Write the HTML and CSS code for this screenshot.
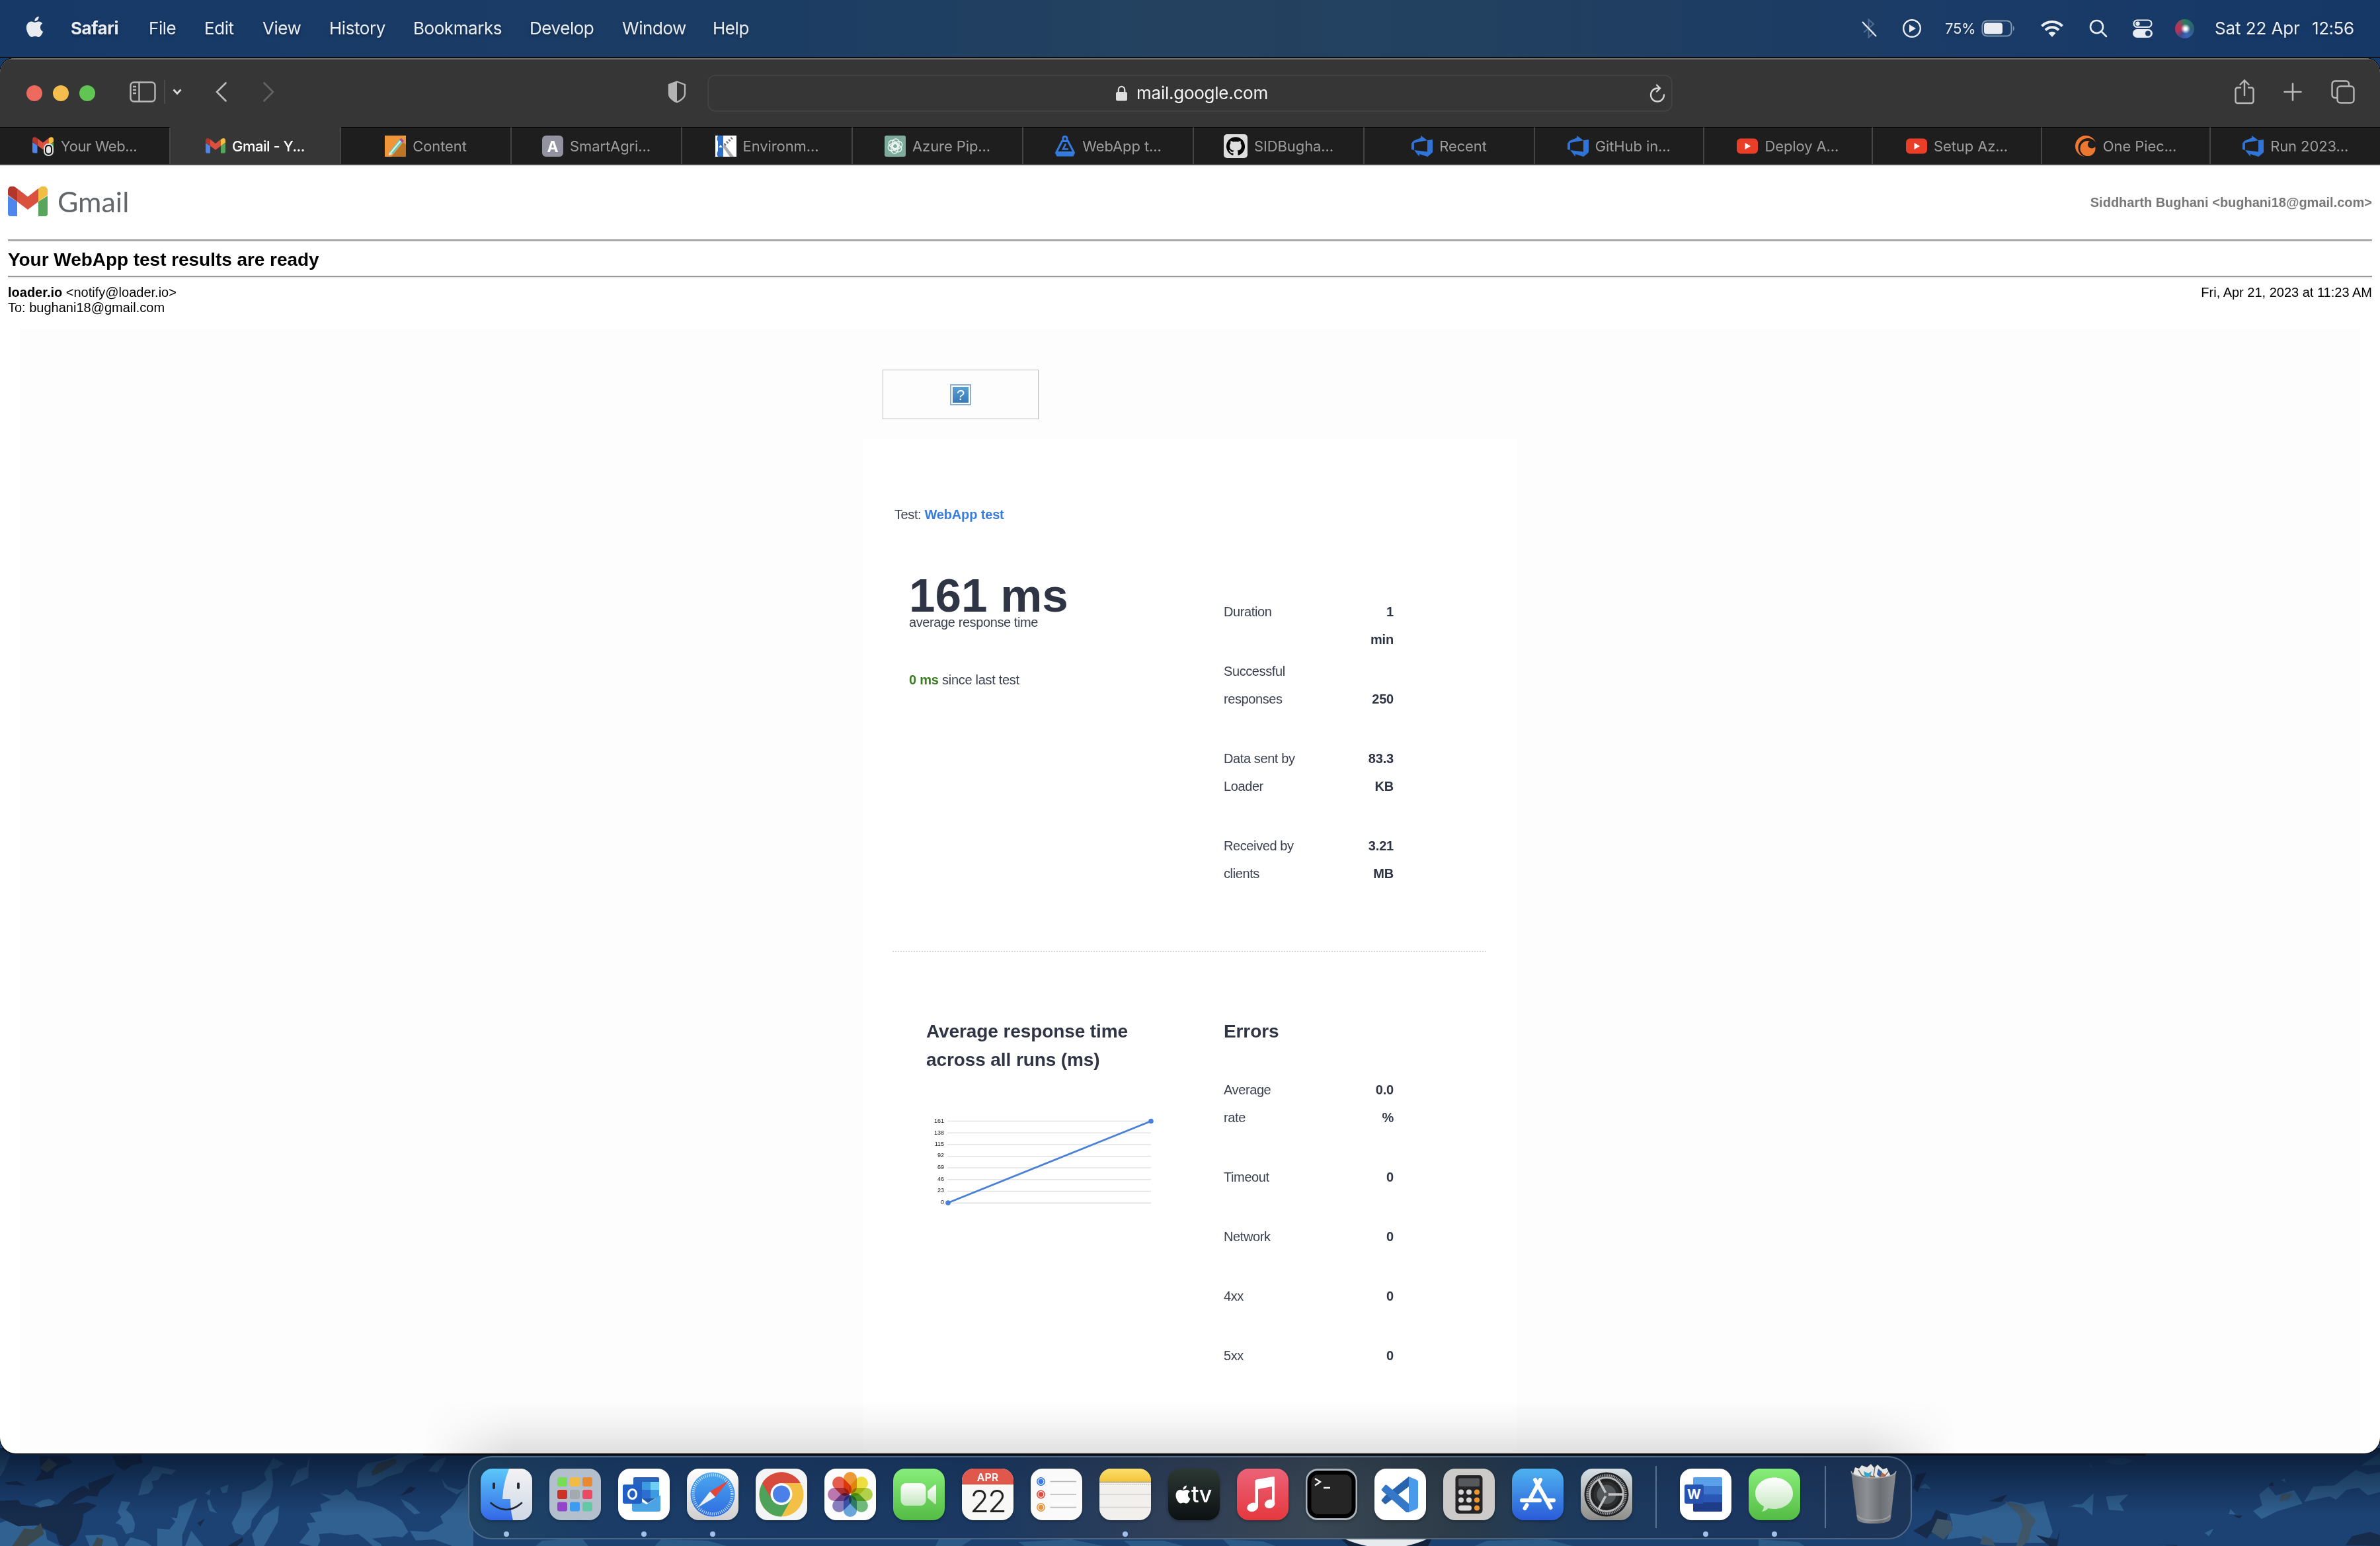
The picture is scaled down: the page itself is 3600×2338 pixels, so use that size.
FILE: index.html
```html
<!DOCTYPE html>
<html lang="en">
<head>
<meta charset="utf-8">
<title>Gmail - Your WebApp test results are ready</title>
<link rel="stylesheet" href="styles.css">
</head>
<body>
<svg class="defs" width="0" height="0" aria-hidden="true">
  <defs>
    <symbol id="apple" viewBox="0 0 24 24"><path fill="currentColor" d="M12.152 6.896c-.948 0-2.415-1.078-3.96-1.04-2.04.027-3.91 1.183-4.961 3.014-2.117 3.675-.546 9.103 1.519 12.09 1.013 1.454 2.208 3.09 3.792 3.039 1.52-.065 2.09-.987 3.935-.987 1.831 0 2.35.987 3.96.948 1.637-.026 2.676-1.48 3.676-2.948 1.156-1.688 1.636-3.325 1.662-3.415-.039-.013-3.182-1.221-3.22-4.857-.026-3.04 2.48-4.494 2.597-4.559-1.429-2.09-3.623-2.324-4.39-2.376-2-.156-3.675 1.09-4.61 1.09zM15.53 3.83c.843-1.012 1.4-2.427 1.245-3.83-1.207.052-2.662.805-3.532 1.818-.78.896-1.454 2.338-1.273 3.714 1.338.104 2.715-.688 3.559-1.701"/></symbol>
    <symbol id="gmail" viewBox="0 0 60 45">
      <path fill="#4f86ec" d="M0 14l14 9v22H4a4 4 0 0 1-4-4z"/>
      <path fill="#58a65c" d="M46 23l14-9v27a4 4 0 0 1-4 4H46z"/>
      <path fill="#d9503f" d="M14 3l16 12.500L46 3v20L30 35 14 23z"/>
      <path fill="#b3362b" d="M0 6C0 0 6-2 10.500 .8L14 3.300V23L0 13z"/>
      <path fill="#f1bd42" d="M60 6C60 0 54-2 49.500 .8L46 3.300V23l14-10z"/>
    </symbol>
    <symbol id="devops" viewBox="0 0 24 24"><path fill="#2f74d6" d="M0 8.877L2.247 5.910l8.405-3.416V.022l7.370 5.393L2.966 8.338v8.225L0 15.707zm24-4.450v14.651l-5.753 4.900-9.303-3.057v3.056l-5.978-7.416 15.057 1.798V5.415z"/></symbol>
    <symbol id="youtube" viewBox="0 0 32 24"><rect width="32" height="23" y=".5" rx="6" fill="#ea3e28"/><path fill="#fff" d="M12.500 7l8.500 5-8.500 5z"/></symbol>
    <linearGradient id="finderBlue" x2="0" y2="1"><stop offset="0" stop-color="#5bc8fa"/><stop offset="1" stop-color="#3467e6"/></linearGradient>
    <linearGradient id="finderPale" x2="0" y2="1"><stop offset="0" stop-color="#f2f2f4"/><stop offset="1" stop-color="#cfd8e6"/></linearGradient>
    <linearGradient id="compass" x2="0" y2="1"><stop offset="0" stop-color="#4aa8f0"/><stop offset="1" stop-color="#2f6ce0"/></linearGradient>
    <linearGradient id="safariBase" x2="0" y2="1"><stop offset="0" stop-color="#fff"/><stop offset="1" stop-color="#cfcfcf"/></linearGradient>
    <linearGradient id="whiteFade" x2="0" y2="1"><stop offset="0" stop-color="#fff"/><stop offset="1" stop-color="#c3e6bd"/></linearGradient>
    <linearGradient id="noteTop" x2="0" y2="1"><stop offset="0" stop-color="#fbe06c"/><stop offset="1" stop-color="#f4c33a"/></linearGradient>
    <linearGradient id="gearBase" x2="0" y2="1"><stop offset="0" stop-color="#d6e0e7"/><stop offset="1" stop-color="#8f8d8a"/></linearGradient>
    <linearGradient id="trashBody"><stop offset="0" stop-color="#6d7176"/><stop offset=".35" stop-color="#8d9195"/><stop offset=".65" stop-color="#6c6f73"/><stop offset="1" stop-color="#888b90"/></linearGradient>
    <linearGradient id="vignette" x2="0" y2="1"><stop offset="0" stop-color="#061226" stop-opacity=".78"/><stop offset="1" stop-color="#061226" stop-opacity="0"/></linearGradient>
    <linearGradient id="questionBg" x2="0" y2="1"><stop offset="0" stop-color="#57a0d3"/><stop offset="1" stop-color="#3878b8"/></linearGradient>
  </defs>
</svg>

<div class="desktop">
  <svg class="wallpaper" viewBox="0 0 3600 168" width="3600" height="168" aria-hidden="true">
    <rect width="3600" height="168" fill="#1c4274"/>
    <g transform="scale(.4592 .3333)">
      <g fill="#306190">
        <path d="M0 60l34 30-20 70-14 30z"/>
        <path d="M0 400l30-15 50 5 40-30 15 20-10 35 25 20 5 40 45 30H0z"/>
        <path d="M112 315l30-20 20-5 20 15-20 25-10 20-15-18z"/>
        <path d="M400 300l30 5-15 35 20 25 10 40-5 35-25 10-15-40-20-10 20-25-12-25z"/>
        <path d="M455 275l15-75 25-30 10-30 35 10 40 10-15 20-30-5-15 30-20 5 5 30-15 25z"/>
        <path d="M590 325l60-40-50 170 0 49H518v-80l40 5 20-35-15-20 20 5z"/>
        <path d="M870 175l30-70 35 25-20 20-20 5 5 70-10 60-35 55-25 45-5 35-25 35-25-10-12-45 30-75 5-65 40-15 40-40z"/>
        <path d="M830 450l40-85 50-45-5 75-25 60-20 49h-30z"/>
        <path d="M955 235l25-75 30-15 10-50-3 60-2 40z"/>
        <path d="M690 290l10 40 15 25-25-10-8-45zM725 240l28-15-5 35-15 5zM675 265l20-20-5 30z"/>
        <path d="M985 490l35-60-10-30 30-5-20-40 40-10-5-30 35-20-35-30 40 10 25-5 20-25 25 25 10 25 40 10 50 25 40 35 20 25 20 50-20 25-25-5-40 5-35 5 30 25 10 45-15-10-50-60-20-20-45 5-45-10-40 5 5 30-10 30z"/>
        <path d="M1175 240l5-70 30-40 70-20 40-25 90 10-40 20-30 20-15 35-50 20-50 40z"/>
        <path d="M1410 165l30-50 30-15-10 35-20 35zM1455 200l20 35 40 15 30-20-40 40-40-30zM1320 290l30 20 35 45-20 5-30-35z"/>
        <path d="M1350 435l60 5 50-40-10-30 40-45 45-95 25-50V504h-70l-60-30-60 5z"/>
        <path d="M280 455l60-3 40 15 10 37h-95zM410 504l20-40 50 20 20 20zM610 504l20-70 20 35 20 35z"/>
      </g>
      <g fill="#172b4b">
        <path d="M370 95l95-8 5 40-35 10-25 25-25-20z"/>
        <path d="M0 300l60-5 10 20 60 15 60-15 40-55 45-30 20 20-5-30 90-45-20 45-30 30-10 30-30-5-55 40 50-10 35 15-45 40-5 50-20 70-30 30-25-15-10-45-60-40-65 5-60-40z"/>
        <path d="M130 95h90l20 30-40 20-20 20-5 30-60 15 20-40zM15 215l40-5 30 20-60-5zM1320 275l30-40 20 5-15 20zM650 400l25-20-15 35zM750 504l50-40v20l-20 20z"/>
      </g>
      <g fill="#3a4850"><path d="M1225 165l20-35 60-25v25l-50 40-30 15zM40 504l40-80 30 5 25-30 10 50-55 55zM305 504l15-40 20 10-5 30zM130 150l30-45 30 30-35 35z"/></g>
    </g>
    <g transform="translate(2880 0) scale(.4592 .3333)">
      <g fill="#306190">
        <path d="M140 475l20-65-10-55 60 10 60-20 40-15 40-30 50 15 60-15 10 50 20 90-20 49H300l-80-30z"/>
        <path d="M425 320l25-5 20 25-25 25zM540 330l25-15 20 0 40-50-5 100-30-35-45-5zM665 280l75-10-30 40 15 35-50-5z"/>
        <path d="M660 120q40-30 95-5-40 40-95 5zM610 125l15 28-12-5z" opacity=".5"/>
        <path d="M1150 345l30-25-10-50 30-35 25 40 60-25 28 62-85 35-50 35z"/>
        <path d="M1318 304l30-70 70-5 70-70 40 20 40-10v90l-40 15-30-35-40 10-35 45-20-15-35 10z"/>
        <path d="M1505 140l63-60v55zM990 445l30-20-15 35zM1070 360l5-25 18 26zM1240 205l14-6 3 16zM50 240l20-20 20 25z"/>
      </g>
      <g fill="#172b4b"><path d="M30 435l60-50 15-45 40 20-10 50-50 40-10 20zM280 300l60-30-20 35zM480 504l-45-50 30 10 40 10 10-50-10 80zM1455 500l20-40 60-20 33 15v49zM1085 365l30 0-10 15zM840 495l60 5v4zM1200 230l14-18 4 20zM30 240l10-60 35-10-20 50-10 40z"/></g>
      <g fill="#3f5568"><path d="M90 440l20-60 45 10 5 40-30 45zM330 300l60 20 45 70-15 30-10 60-20 24h-20l20-90-10-50zM1235 300l10-35 35 2-15 30zM250 495l10-40 30 20 10 29z"/></g>
    </g>
    <rect x="716" y="120" width="2168" height="48" fill="#1b4170"/>
    <path d="M820 160l60-4 10 12h-80zM1000 158l70 2 30 8H990zM1420 158l50 0-15 10h-40zM1540 162l80-4 50 10h-120zM1700 160l60 0 30 8h-80zM1850 158l60 3 20 7h-70zM2250 160l90-2 40 10h-150zM2660 158l60 4 10 6h-70z" fill="#2b5a87"/>
    <path d="M2020 150h150l-10 18h-120z" fill="#14233c"/>
    <path d="M2033 157q65 28 127 0v-6h-127z" fill="#e8ebee"/>
    <rect width="3600" height="100" y="20" fill="url(#vignette)"/>
    <rect x="640" y="28" width="2605" height="3" fill="#0b0b0d"/>
  </svg>

  <header class="menubar">
    <svg class="apple"><use href="#apple"/></svg>
    <nav class="menus">
      <b>Safari</b><span>File</span><span>Edit</span><span>View</span><span>History</span><span>Bookmarks</span><span>Develop</span><span>Window</span><span>Help</span>
    </nav>
    <div class="status">
      <svg width="28" height="30" viewBox="0 0 28 30" fill="none"><path d="M3 9l15 12.500-7.500 7V1.500l7.500 7L3 21" stroke="#4d6a8d" stroke-width="2.200"/><path d="M1 5l21 22" stroke="#e6ecf2" stroke-width="2.200"/></svg>
      <svg width="30" height="30" viewBox="0 0 30 30"><circle cx="15" cy="15" r="12.800" fill="none" stroke="#e9edf2" stroke-width="2.400"/><path d="M11 9l10 6-10 6z" fill="#e9edf2"/></svg>
      <span class="percent">75%</span>
      <svg width="54" height="26" viewBox="0 0 54 26"><rect x="2.500" y="1.500" width="44" height="23" rx="7" fill="none" stroke="#7f94ad" stroke-width="2.200"/><rect x="5" y="4.500" width="28" height="17" rx="4" fill="#e9edf2"/><path d="M49 9q4 4 0 8z" fill="#7f94ad"/></svg>
      <svg width="36" height="28" viewBox="0 0 36 28" fill="none" stroke="#e9edf2" stroke-width="4"><path d="M2.500 10.500a22 22 0 0 1 31 0M8 16.500a14 14 0 0 1 20 0"/><path d="M18 27l-5.500-6a8 8 0 0 1 11 0z" fill="#e9edf2" stroke="none"/></svg>
      <svg width="28" height="28" viewBox="0 0 28 28" fill="none" stroke="#e9edf2" stroke-width="2.600"><circle cx="11.500" cy="11.500" r="9.500"/><path d="M18.500 18.500l7.500 7.500" stroke-linecap="round"/></svg>
      <svg width="30" height="28" viewBox="0 0 30 28"><rect x="1.500" y="1.500" width="27" height="10.500" rx="5.250" fill="none" stroke="#e9edf2" stroke-width="2.200"/><circle cx="7.500" cy="6.700" r="3.200" fill="#e9edf2"/><rect y="15" width="30" height="13" rx="6.500" fill="#e9edf2"/><circle cx="23" cy="21.500" r="4" fill="#1b3c68"/></svg>
      <span class="siri"></span>
      <span class="date">Sat 22 Apr</span>
      <span class="time">12:56</span>
    </div>
  </header>
  <div class="strip"><i class="chip-a"></i><i class="chip-b"></i></div>

  <main class="window">
    <div class="toolbar">
      <div class="lights"><i class="red"></i><i class="yellow"></i><i class="green"></i></div>
      <svg class="sidebar-icon" width="40" height="32" viewBox="0 0 40 32" fill="none" stroke="#b9b9b9" stroke-width="2.400"><rect x="1.500" y="1.500" width="37" height="29" rx="5"/><path d="M14.500 2v28M5 8h5M5 13h5M5 18h5"/></svg>
      <i class="bar"></i>
      <svg class="caret" width="14" height="10" viewBox="0 0 14 10" fill="none" stroke="#dcdcdc" stroke-width="2.800"><path d="M1.500 1.500L7 7.500l5.500-6"/></svg>
      <svg class="back" width="17" height="30" viewBox="0 0 17 30" fill="none" stroke="#bdbdbd" stroke-width="2.600" stroke-linecap="round"><path d="M15.500 1.500L2 15l13.500 13.500"/></svg>
      <svg class="forward" width="17" height="30" viewBox="0 0 17 30" fill="none" stroke="#646464" stroke-width="2.600" stroke-linecap="round"><path d="M1.500 1.500L15 15 1.500 28.500"/></svg>
      <svg class="shield" width="28" height="34" viewBox="0 0 28 34"><path d="M14 1.500L26 6v14q0 7-12 12.500Q2 27 2 20V6z" fill="none" stroke="#b4b4b4" stroke-width="2.400"/><path d="M14 1.500V32.500Q2 27 2 20V6z" fill="#b4b4b4"/></svg>
      <div class="address">
        <svg width="18" height="24" viewBox="0 0 18 24"><rect y="10" width="17" height="13.500" rx="2.500" fill="#dedede"/><path d="M3.800 11V6.500a4.700 4.700 0 0 1 9.400 0V11" fill="none" stroke="#dedede" stroke-width="2.200"/></svg>
        <span>mail.google.com</span>
        <svg class="reload" width="24" height="28" viewBox="0 0 24 28" fill="none" stroke="#d6d6d6" stroke-width="2.300" stroke-linecap="round"><path d="M14.500 6.500H12A10 10 0 1 0 22 16.500M11 1.500l5 5-5 5"/></svg>
      </div>
      <svg class="share" width="30" height="38" viewBox="0 0 30 38" fill="none" stroke="#b9b9b9" stroke-width="2.400" stroke-linecap="round"><path d="M9 12.500H4.500a3 3 0 0 0-3 3V33a3 3 0 0 0 3 3h21a3 3 0 0 0 3-3V15.500a3 3 0 0 0-3-3H21M15 24V2M8.500 8L15 1.500 21.500 8"/></svg>
      <svg class="plus" width="28" height="28" viewBox="0 0 28 28" stroke="#b9b9b9" stroke-width="2.600" stroke-linecap="round"><path d="M14 1.500v25M1.500 14h25"/></svg>
      <svg class="overview" width="36" height="36" viewBox="0 0 36 36" fill="none" stroke="#b9b9b9" stroke-width="2.400"><rect x="9.500" y="9.500" width="25" height="25" rx="4.500"/><path d="M9 27H6a4.500 4.500 0 0 1-4.500-4.500V6A4.500 4.500 0 0 1 6 1.500h16.500A4.500 4.500 0 0 1 27 6v3"/></svg>
    </div>

    <div class="tabs">
      <div class="tab"><svg width="33" height="30" viewBox="0 0 33 30"><use href="#gmail" y="1" width="32" height="25"/><rect x="18" y="12" width="13" height="17" rx="6" fill="#111" stroke="#ddd" stroke-width="2"/><rect x="21" y="15" width="7" height="11" rx="3.500" fill="#e6e6e6"/></svg><span>Your Web...</span></div>
      <div class="tab active"><svg width="30" height="23"><use href="#gmail"/></svg><span>Gmail - Y...</span></div>
      <div class="tab"><svg width="32" height="32" viewBox="0 0 32 32"><rect width="32" height="32" fill="#f0953a"/><path d="M10 32l18-22 4 4v18z" fill="#bf7526"/><path d="M7 25l15-19 5 4-15 18-6 2z" fill="#5fc8d8"/><path d="M9 26l15-18" stroke="#eaf7c0" stroke-width="2"/><path d="M22 6l3-2 4 4-2 3z" fill="#a04fa0"/><path d="M7 25l-1 5 6-2z" fill="#f7e3c4"/></svg><span>Content</span></div>
      <div class="tab"><svg width="32" height="32" viewBox="0 0 32 32"><rect width="32" height="32" rx="6" fill="#9292a0"/><text x="16" y="24.500" class="fav-letter">A</text></svg><span>SmartAgri...</span></div>
      <div class="tab"><svg width="32" height="32" viewBox="0 0 32 32"><rect width="32" height="32" fill="#fff"/><path d="M4 0h8v32H4q-3-4 0-9V9q-3-4 0-9z" fill="#2e6fc8"/><path d="M13 12l15 20h-6L12 18z" fill="#a9acb0"/><path d="M14 14L27 2" stroke="#6f7478" stroke-width="4" stroke-dasharray="2 2.500"/><path d="M5 18l3-4 3 4z" fill="#fff"/></svg><span>Environm...</span></div>
      <div class="tab"><svg width="32" height="32" viewBox="0 0 32 32"><rect width="32" height="32" rx="3" fill="#7fab9c"/><g fill="none" stroke="#eef6f3" stroke-width="1.400"><rect x="12" y="5" width="10" height="15" rx="5"/><rect x="12" y="5" width="10" height="15" rx="5" transform="rotate(60 16 16)"/><rect x="12" y="5" width="10" height="15" rx="5" transform="rotate(120 16 16)"/><rect x="12" y="5" width="10" height="15" rx="5" transform="rotate(180 16 16)"/><rect x="12" y="5" width="10" height="15" rx="5" transform="rotate(240 16 16)"/><rect x="12" y="5" width="10" height="15" rx="5" transform="rotate(300 16 16)"/></g></svg><span>Azure Pip...</span></div>
      <div class="tab"><svg width="32" height="32" viewBox="0 0 32 32" fill="none" stroke="#347be0" stroke-width="3"><path d="M11.500 8.500L2.500 26l2 4h23l2-4-9-17.500zM13 7V4q0-2.500 3-2.500T19 4v3"/><path d="M3 24h26v3l-2 4H5l-2-4z" fill="#347be0" stroke="none"/><path d="M17 12.500l-4 8h8" stroke-width="2.600"/></svg><span>WebApp t...</span></div>
      <div class="tab"><svg width="36" height="36" viewBox="0 0 36 36"><rect width="36" height="36" rx="5" fill="#dedede"/><g transform="translate(4 4) scale(1.170)"><path fill="#050505" d="M12 .297c-6.630 0-12 5.373-12 12 0 5.303 3.438 9.800 8.205 11.385.6.113.82-.258.82-.577 0-.285-.01-1.040-.015-2.040-3.338.724-4.042-1.610-4.042-1.610C4.422 18.070 3.633 17.700 3.633 17.700c-1.087-.744.084-.729.084-.729 1.205.084 1.838 1.236 1.838 1.236 1.070 1.835 2.809 1.305 3.495.998.108-.776.417-1.305.76-1.605-2.665-.3-5.466-1.332-5.466-5.930 0-1.310.465-2.380 1.235-3.220-.135-.303-.54-1.523.105-3.176 0 0 1.005-.322 3.300 1.230.96-.267 1.980-.399 3-.405 1.020.006 2.040.138 3 .405 2.280-1.552 3.285-1.230 3.285-1.230.645 1.653.24 2.873.12 3.176.765.84 1.230 1.910 1.230 3.220 0 4.610-2.805 5.625-5.475 5.920.42.36.81 1.096.81 2.220 0 1.606-.015 2.896-.015 3.286 0 .315.21.69.825.57C20.565 22.092 24 17.592 24 12.297c0-6.627-5.373-12-12-12"/></g></svg><span>SIDBugha...</span></div>
      <div class="tab"><svg width="32" height="32"><use href="#devops"/></svg><span>Recent</span></div>
      <div class="tab"><svg width="32" height="32"><use href="#devops"/></svg><span>GitHub in...</span></div>
      <div class="tab"><svg width="32" height="24"><use href="#youtube"/></svg><span>Deploy A...</span></div>
      <div class="tab"><svg width="32" height="24"><use href="#youtube"/></svg><span>Setup Az...</span></div>
      <div class="tab"><svg width="32" height="32" viewBox="0 0 32 32"><circle cx="16" cy="16" r="16" fill="#ee7730"/><circle cx="19" cy="18.500" r="14.500" fill="#1e1e1e"/><circle cx="19" cy="19.500" r="11.500" fill="#ee7730"/><circle cx="25" cy="13.500" r="6" fill="#1e1e1e"/></svg><span>One Piec...</span></div>
      <div class="tab"><svg width="32" height="32"><use href="#devops"/></svg><span>Run 2023...</span></div>
    </div>

    <div class="page">
      <div class="brand">
        <svg width="60" height="45"><use href="#gmail"/></svg><span class="wordmark">Gmail</span>
        <b class="account">Siddharth Bughani &lt;bughani18@gmail.com&gt;</b>
      </div>
      <div class="rule"></div>
      <h1 class="subject">Your WebApp test results are ready</h1>
      <div class="rule"></div>
      <div class="meta">
        <div><b>loader.io</b> &lt;notify@loader.io&gt;<br>To: bughani18@gmail.com</div>
        <div>Fri, Apr 21, 2023 at 11:23 AM</div>
      </div>
      <div class="message">
        <div class="column">
          <div class="missing">
            <svg width="32" height="32" viewBox="0 0 32 32"><rect x="1" y="1" width="30" height="30" fill="#fff" stroke="#8fb0d4" stroke-width="2"/><rect x="4" y="4" width="24" height="24" fill="url(#questionBg)"/><text x="16" y="23.500" class="question">?</text></svg>
          </div>
          <div class="card">
            <p class="test-name">Test: <b>WebApp test</b></p>
            <section class="summary">
              <div class="headline">
                <p class="big">161 ms</p>
                <p class="small">average response time</p>
                <p class="small delta"><b>0 ms</b> since last test</p>
              </div>
              <div class="facts">
                <div class="fact tight"><span>Duration</span><b>1<br>min</b></div>
                <div class="fact low"><span>Successful<br>responses</span><b>250</b></div>
                <div class="fact"><span>Data sent by<br>Loader</span><b>83.3<br>KB</b></div>
                <div class="fact"><span>Received by<br>clients</span><b>3.21<br>MB</b></div>
              </div>
            </section>
            <div class="dots"></div>
            <section class="details">
              <div class="runs">
                <h2>Average response time<br>across all runs (ms)</h2>
                <svg class="chart" width="350" height="150" viewBox="0 0 350 150">
                  <g stroke="#e3e3e3" stroke-width="1.600"><path d="M32 15.500h308M32 33.200h308M32 51h308M32 68.800h308M32 86h308M32 103.800h308M32 121.600h308M32 139.400h308"/></g>
                  <g class="ticks"><text x="27" y="17.500">161</text><text x="27" y="35.500">138</text><text x="27" y="52.500">115</text><text x="27" y="70">92</text><text x="27" y="88">69</text><text x="27" y="105.500">46</text><text x="27" y="122.500">23</text><text x="27" y="140.500">0</text></g>
                  <path d="M33 139L340 15.500" stroke="#4a80d6" stroke-width="2.800"/>
                  <circle cx="33" cy="139" r="3.800" fill="#4a80d6"/><circle cx="340" cy="15.500" r="3.800" fill="#4a80d6"/>
                </svg>
              </div>
              <div class="errors">
                <h2>Errors</h2>
                <div class="fact"><span>Average<br>rate</span><b>0.0<br>%</b></div>
                <div class="fact"><span>Timeout</span><b>0</b></div>
                <div class="fact"><span>Network</span><b>0</b></div>
                <div class="fact"><span>4xx</span><b>0</b></div>
                <div class="fact"><span>5xx</span><b>0</b></div>
              </div>
            </section>
          </div>
        </div>
      </div>
      <div class="dock-shade"></div>
    </div>
  </main>

  <div class="dock">
    <div class="app running"><svg viewBox="0 0 78 78"><rect width="78" height="78" fill="url(#finderBlue)"/><path d="M43 0Q34 22 33 46h12q0 18 4 32h29V0z" fill="url(#finderPale)"/><path d="M20 23v6M57 23v6" stroke="#222a36" stroke-width="4" stroke-linecap="round"/><path d="M15.500 52Q39 72 62 52" fill="none" stroke="#1c2430" stroke-width="2.600" stroke-linecap="round"/></svg></div>
    <div class="app"><svg viewBox="0 0 78 78"><rect width="78" height="78" fill="#b3bfcc"/><g><rect x="12" y="13" width="15" height="14" rx="3" fill="#79dc55"/><rect x="31" y="13" width="15" height="14" rx="3" fill="#f2bb45"/><rect x="50" y="13" width="15" height="14" rx="3" fill="#e88934"/><rect x="12" y="32" width="15" height="14" rx="3" fill="#cc3327"/><rect x="31" y="32" width="15" height="14" rx="3" fill="#a3a9ae"/><rect x="50" y="32" width="15" height="14" rx="3" fill="#ea4a62"/><rect x="12" y="50.500" width="15" height="14" rx="3" fill="#9444c8"/><rect x="31" y="50.500" width="15" height="14" rx="3" fill="#3f9bf0"/><rect x="50" y="50.500" width="15" height="14" rx="3" fill="#64c8a4"/></g></svg></div>
    <div class="app running"><svg viewBox="0 0 78 78"><rect width="78" height="78" fill="#fff"/><path d="M23 15q0-2 2-2h35q2 0 2 2v23H23z" fill="#2b62b8"/><path d="M23 20h13v12H23z" fill="#1f65bd"/><path d="M36 20h13v12H36z" fill="#3d9ae0"/><path d="M49 20h13v12H49z" fill="#6fd0f5"/><path d="M23 32h26v13H23z" fill="#2c6fd0"/><path d="M49 32h13v13H49z" fill="#3d9ae0"/><path d="M21 42l22 12 21-14v22q0 3-3 3H24q-3 0-3-3z" fill="#4ba3e4"/><path d="M36 45h20L45 52z" fill="#235cac"/><rect x="7" y="24" width="29" height="29" rx="3" fill="#225fc4"/><ellipse cx="21.500" cy="38.500" rx="6" ry="7" fill="none" stroke="#fff" stroke-width="3.200"/></svg></div>
    <div class="app running"><svg viewBox="0 0 78 78"><rect width="78" height="78" fill="url(#safariBase)"/><circle cx="39" cy="39" r="33.500" fill="url(#compass)"/><circle cx="39" cy="39" r="29.500" fill="none" stroke="#d8ebfb" stroke-width="4.500" stroke-dasharray="1 2.100"/><path d="M63 18L35 34.500l8 8.500z" fill="#e2473a"/><path d="M16 59l19-24.500 8 8.500z" fill="#eef1f4"/></svg></div>
    <div class="app"><svg viewBox="0 0 78 78"><rect width="78" height="78" fill="#f3f4f5"/><circle cx="39" cy="39" r="33.500" fill="#f3bf44"/><path d="M39 39L10.500 21.500A33.500 33.500 0 0 0 39 72.500L54 46z" fill="#4ea35a"/><path d="M39 22h29A33.500 33.500 0 0 0 10 22l14 24z" fill="#d64b3b"/><circle cx="39" cy="38.500" r="16.500" fill="#fff"/><circle cx="39" cy="38.500" r="13" fill="#4b80e8"/></svg></div>
    <div class="app"><svg viewBox="0 0 78 78"><rect width="78" height="78" fill="#fcfcfc"/><g class="petals"><rect x="29" y="5" width="20" height="33" rx="10" fill="#f19a37"/><rect x="29" y="5" width="20" height="33" rx="10" fill="#f0e03e" transform="rotate(45 39 39)"/><rect x="29" y="5" width="20" height="33" rx="10" fill="#b3d34d" transform="rotate(90 39 39)"/><rect x="29" y="5" width="20" height="33" rx="10" fill="#71bb7d" transform="rotate(135 39 39)"/><rect x="29" y="5" width="20" height="33" rx="10" fill="#6ba7dd" transform="rotate(180 39 39)"/><rect x="29" y="5" width="20" height="33" rx="10" fill="#8a7fc0" transform="rotate(225 39 39)"/><rect x="29" y="5" width="20" height="33" rx="10" fill="#bd79b0" transform="rotate(270 39 39)"/><rect x="29" y="5" width="20" height="33" rx="10" fill="#e85e4d" transform="rotate(315 39 39)"/></g></svg></div>
    <div class="app green-app"><svg viewBox="0 0 78 78"><rect x="11.500" y="22" width="38" height="34" rx="8" fill="url(#whiteFade)"/><path d="M52 34l11-9.500q2-1 2 1v27q0 2-2 1L52 44z" fill="url(#whiteFade)"/></svg></div>
    <div class="app calendar"><span class="month">APR</span><span class="day">22</span></div>
    <div class="app"><svg viewBox="0 0 78 78"><rect width="78" height="78" fill="#fafafa"/><g fill="none" stroke-width="1.600"><circle cx="15.500" cy="19.500" r="5.700" stroke="#3478f0"/><circle cx="15.500" cy="39" r="5.700" stroke="#e0493c"/><circle cx="15.500" cy="58.500" r="5.700" stroke="#e5943a"/></g><circle cx="15.500" cy="19.500" r="3.800" fill="#3478f0"/><circle cx="15.500" cy="39" r="3.800" fill="#e0493c"/><circle cx="15.500" cy="58.500" r="3.800" fill="#e5943a"/><path d="M29.500 19.500H69M29.500 39H69M29.500 58.500H69" stroke="#b8b8bc" stroke-width="1.600"/></svg></div>
    <div class="app running"><svg viewBox="0 0 78 78"><rect width="78" height="78" fill="#f1f0ec"/><rect width="78" height="20" fill="url(#noteTop)"/><path d="M0 20.500h78" stroke="#a9a48e" stroke-width="1.500"/><path d="M2 24h76" stroke="#b5b4ae" stroke-width="1.500" stroke-dasharray="1.200 1.800"/><path d="M0 39h78M0 58.500h78" stroke="#d5d4cf" stroke-width="1.400"/></svg></div>
    <div class="app tv"><svg class="tv-apple"><use href="#apple"/></svg><span>tv</span></div>
    <div class="app music"><svg viewBox="0 0 78 78" fill="#fff"><path d="M27.500 18.500q0-1.500 2-2L55 12q2-.4 2 1.500V52h-4V27l-21 4v26h-4.500z"/><ellipse cx="23.500" cy="58.500" rx="8.500" ry="6.500" transform="rotate(-20 23 58)"/><ellipse cx="49.500" cy="53.500" rx="8" ry="6.500" transform="rotate(-20 49 53)"/></svg></div>
    <div class="app"><svg viewBox="0 0 78 78"><rect width="78" height="78" rx="18" fill="#a9b4bc"/><rect x="2.500" y="3" width="73" height="72" rx="16" fill="#000"/><rect x="8.500" y="9" width="61" height="60" rx="10" fill="#252525"/><path d="M14 15l8 5-8 5.500M27 29h10" fill="none" stroke="#f2f2f2" stroke-width="2.400"/></svg></div>
    <div class="app"><svg viewBox="0 0 78 78"><rect width="78" height="78" fill="#fff"/><path d="M11 47l5-6L52 12v15L18 53q-2 1-3 0l-4-4q-1-1 0-2z" fill="#2764ad"/><path d="M11 31l5-6q1-1 3 0l33 28v13L48 66 11 33q-1-1 0-2z" fill="#3578c8"/><path d="M52 12l12 5q2 1 2 3v38q0 2-2 3l-12 5z" fill="#4a9aec"/></svg></div>
    <div class="app"><svg viewBox="0 0 78 78"><rect width="78" height="78" fill="#cccbca"/><rect x="18.500" y="10" width="41" height="58" rx="5" fill="#242426"/><rect x="23" y="14.500" width="32" height="12.500" rx="2" fill="#57585c"/><g fill="#d8d8d8"><circle cx="27" cy="35.500" r="4"/><circle cx="39" cy="35.500" r="4"/><circle cx="27" cy="47.500" r="4"/><circle cx="39" cy="47.500" r="4"/><rect x="23" y="55.500" width="20" height="8" rx="4"/></g><g fill="#ef9631"><circle cx="51" cy="35.500" r="4"/><circle cx="51" cy="47.500" r="4"/><circle cx="51" cy="59.500" r="4"/></g></svg></div>
    <div class="app store"><svg viewBox="0 0 78 78" fill="none" stroke="#fff" stroke-linecap="round" stroke-width="6"><path d="M43 17L28.500 44M35 17l23.500 42M15 48h27M55 48h8M22.500 55L19.500 60"/></svg></div>
    <div class="app"><svg viewBox="0 0 78 78"><rect width="78" height="78" fill="url(#gearBase)"/><circle cx="39" cy="39" r="33.500" fill="#1f2123"/><circle cx="39" cy="39" r="29" fill="none" stroke="#9a9da0" stroke-width="3.500" stroke-dasharray="1.500 1.200"/><circle cx="39" cy="39" r="25.500" fill="none" stroke="#b6b8ba" stroke-width="3"/><circle cx="39" cy="39" r="17" fill="#55585b" stroke="#2c2e30" stroke-width="5"/><path d="M39 39h25M39 39L27 17M39 39L27 61" stroke="#c3c5c7" stroke-width="3.600"/><circle cx="39" cy="39" r="3" fill="#55585b"/></svg></div>
    <i class="sep"></i>
    <div class="app running"><svg viewBox="0 0 78 78"><rect width="78" height="78" fill="#fff"/><rect x="20" y="13" width="44" height="52" rx="2" fill="#5aa0e8"/><path d="M20 26h44v13H20z" fill="#3d76cf"/><path d="M20 39h44v12H20z" fill="#2a57b6"/><path d="M20 51h44v12q0 2-2 2H22q-2 0-2-2z" fill="#1e3c88"/><rect x="7" y="24" width="29" height="29" rx="3" fill="#2753b0"/><text x="21.500" y="46" class="word-letter">W</text></svg></div>
    <div class="app green-app running"><svg viewBox="0 0 78 78"><path d="M38.500 13.500c16 0 28.500 10.500 28.500 24S54.500 61 38.500 61q-5 0-9-1-3 4-9.500 5 3-3.500 3-8C15 53 10 46 10 37.500c0-13.500 12.500-24 28.500-24z" fill="url(#whiteFade)"/></svg></div>
    <i class="sep second"></i>
    <svg class="trash" width="70" height="92" viewBox="0 0 70 92"><path d="M4 16l3-10 6 2 4-5 8 3 6-5 5 6 5-5 8 7 6-2 5 10-2 14H8z" fill="#e6e6e4"/><path d="M20 12l7 3 5-3-2 8-8 2z" fill="#3aa7c9"/><path d="M42 8l6 5-2 9-6-5z" fill="#345f9e"/><path d="M48 14l6 4-4 5-5-2z" fill="#c95f32"/><path d="M30 18l7 2-3 7-6-2z" fill="#8c7042"/><path d="M12 10l5 8 6 3M37 6l-2 12 4 6M58 12l-7 8" fill="none" stroke="#6c6c6c" stroke-width="1.500"/><path d="M1 12q2 9 34 10 32-1 34-10l-8 71q-1 8-26 8T10 83z" fill="url(#trashBody)"/><path d="M1 12q2 9 34 10 32-1 34-10" fill="none" stroke="#a7aaad" stroke-width="1.500"/><path d="M10 78q4 8 25 8t25-8" fill="none" stroke="#a7aaad" stroke-width="2" opacity=".7"/></svg>
  </div>
</div>
</body>
</html>
```
FILE: styles.css
```css
* { box-sizing: border-box; }
body { margin: 0; background: #1c4274; font-family: "Inter", sans-serif; }
p, h1, h2 { margin: 0; }
svg { display: block; flex: none; }
.defs { position: absolute; }
.desktop { position: relative; width: 3600px; height: 2338px; overflow: hidden; display: flex; flex-direction: column; background: #183a68; }
.wallpaper { position: absolute; left: 0; top: 2170px; }

.menubar { height: 86px; flex: none; display: flex; align-items: flex-start; color: #e9edf2; font-size: 26px; letter-spacing: -.45px; line-height: 32px; background: linear-gradient(90deg, #163968 0, #1b3c64 30%, #24425f 50%, #213f60 65%, #1a3b67 82%, #163867 100%); text-shadow: 0 3px 5px rgba(0,0,0,.25); }
.apple { width: 31px; height: 31px; margin: 25px 0 0 37px; }
.menus { margin: 27px 0 0 39px; display: grid; grid-template-columns: 118px 84px 88px 101px 127px 176px 140px 137px 60px; white-space: nowrap; }
.status { margin: 27px 0 0 auto; width: 784px; display: flex; align-items: center; height: 32px; white-space: nowrap; }
.status > * { flex: none; }
.status > :nth-child(2) { margin-left: 33px; }
.percent { width: 54px; margin-left: 35px; font-size: 22px; letter-spacing: -.3px; }
.status > :nth-child(5) { margin-left: 36px; }
.status > :nth-child(6) { margin-left: 38px; }
.status > :nth-child(7) { margin-left: 38px; }
.siri { width: 29px; height: 29px; margin-left: 34px; border-radius: 50%; background: radial-gradient(circle at 55% 50%, #fff 0 8%, rgba(255,255,255,0) 34%), conic-gradient(#2b7a62, #2c5f77 25%, #3a64b8 45%, #3f4d8c 58%, #b83258 70%, #a83a5a 85%, #2b7a62); }
.date { width: 147px; margin-left: 31px; letter-spacing: -.1px; }
.strip { height: 2px; flex: none; display: flex; align-items: flex-end; background: #10151c; }
.strip i { height: 1px; background: #cfd3d8; }
.chip-a { width: 50px; margin-left: 1438px; }
.chip-b { width: 60px; margin-left: 689px; }

.window { position: relative; height: 2110px; flex: none; border-radius: 22px 22px 24px 24px; overflow: hidden; background: #fff; display: flex; flex-direction: column; box-shadow: 0 0 0 1px #000; }
.toolbar { height: 104px; flex: none; background: #363636; border-top: 2px solid #6d6f70; display: flex; align-items: center; padding-bottom: 4px; }
.lights { display: flex; gap: 16px; margin: 3px 0 0 40px; }
.lights i { width: 24px; height: 24px; border-radius: 50%; }
.red { background: #ec6a5e; }
.yellow { background: #f4be4f; }
.green { background: #61c554; }
.sidebar-icon { margin-left: 52px; }
.bar { width: 2px; height: 36px; margin-left: 12px; background: #4a4a4a; }
.caret { margin-left: 11px; }
.back { margin-left: 51px; }
.forward { margin-left: 55px; }
.shield { margin-left: 595px; }
.address { width: 1460px; height: 56px; margin: 3px 0 0 32px; border: 2px solid #424242; border-radius: 12px; display: flex; align-items: center; padding-left: 616px; color: #f3f3f3; font-size: 26px; letter-spacing: -.25px; }
.address span { margin-left: 13px; }
.reload { margin: 0 9px 0 auto; }
.share { margin-left: 850px; }
.plus { margin-left: 44px; }
.overview { margin-left: 44px; }

.tabs { height: 58px; flex: none; display: grid; grid-template-columns: repeat(9, 258px) repeat(5, 1fr); background: #1e1e1e; border-bottom: 2px solid #4c4c4c; }
.tab { display: flex; align-items: center; justify-content: center; gap: 10px; border-right: 2px solid #454545; border-top: 1px solid #000; font-size: 22px; letter-spacing: -.1px; color: #9d9d9d; white-space: nowrap; }
.tab:first-child { letter-spacing: -.4px; }
.tab:last-child { border-right: 0; }
.tab.active { background: #363636; border-top-color: #363636; color: #fff; font-weight: 500; letter-spacing: -.5px; }
.fav-letter { font: 700 23px "Inter", sans-serif; fill: #fff; text-anchor: middle; }

.page { position: relative; flex: 1; font-family: "Liberation Sans", Arial, sans-serif; font-size: 20px; color: #000; display: flex; flex-direction: column; }
.brand { height: 112px; flex: none; display: flex; align-items: center; padding: 0 12px 3px; }
.wordmark { margin-left: 15px; font: 43px/50px "Lato", sans-serif; color: #63676b; letter-spacing: 0; }
.account { margin: 4px 0 0 auto; color: #777; }
.rule { height: 4px; flex: none; margin: 0 12px; border-top: 2px solid #999; border-bottom: 2px solid #eee; }
.subject { padding: 2px 12px 0; font-size: 28px; line-height: 49px; height: 51px; flex: none; letter-spacing: -.04px; }
.meta { padding: 10px 12px 21px; line-height: 23px; display: flex; justify-content: space-between; flex: none; }
.message { flex: 1; margin: 0 30px; background: #fdfdfd; display: flex; justify-content: center; color: #3a4050; }
.column { width: 990px; padding-top: 61px; display: flex; flex-direction: column; }
.missing { width: 236px; height: 75px; margin-left: 30px; border: 1px solid #bcbcbc; display: flex; align-items: center; justify-content: center; flex: none; }
.question { font: 22px "Liberation Sans", sans-serif; fill: #fff; text-anchor: middle; }
.card { flex: 1; margin-top: 30px; padding: 93px 48px 0; background: #fff; letter-spacing: -.4px; }
.card b { letter-spacing: -.2px; color: #2f3545; }
.card .test-name { line-height: 42px; }
.card .test-name b { color: #3b7ddd; letter-spacing: -.15px; }
.summary, .details { display: grid; grid-template-columns: 498px 257px; }
.summary { margin-top: 72px; }
.headline { padding-left: 22px; }
.big { font-size: 71px; line-height: 60px; font-weight: 700; letter-spacing: 0; color: #2f3545; }
.small { line-height: 20px; }
.delta { margin-top: 67px; letter-spacing: -.3px; }
.card .delta b { color: #3b7d22; }
.facts { padding-top: 33px; }
.fact { display: flex; justify-content: space-between; line-height: 42px; margin-bottom: 48px; }
.fact b { text-align: right; }
.fact.tight { margin-bottom: 6px; }
.fact.low b { align-self: flex-end; }
.facts .fact:last-child { margin-bottom: 0; }
.dots { height: 2px; margin: 96px -3px 98px; background: repeating-linear-gradient(90deg, #d6d6d6 0 2px, #fff 2px 4px); }
.details h2 { font-size: 28px; line-height: 43px; height: 84px; letter-spacing: -.1px; color: #2f3545; }
.errors h2 { height: 42px; margin-bottom: 47px; }
.runs { padding-left: 48px; }
.chart { margin-top: 58px; }
.ticks { font: 9px "Liberation Sans", sans-serif; fill: #222; text-anchor: end; letter-spacing: 0; }
.details .errors h2 { height: 42px; }
.dock-shade { position: absolute; left: 640px; right: 640px; bottom: 0; height: 80px; background: linear-gradient(rgba(0,0,0,0), rgba(0,0,0,.04) 45%, rgba(0,0,0,.12)); mask-image: linear-gradient(90deg, transparent, #000 140px calc(100% - 140px), transparent); }

.dock { position: absolute; left: 708px; top: 2202px; width: 2184px; height: 126px; padding: 0 0 10px 17px; border: 2px solid rgba(140,165,190,.45); border-radius: 36px; display: flex; align-items: center; gap: 26px; background: linear-gradient(rgba(10,20,40,.2), rgba(10,20,40,0) 60%), linear-gradient(90deg, #204464 0, #1a3c67 10%, #1a3862 35%, #303f57 49%, #394653 59%, #2d3c48 68%, #1d3a5c 76%, #1b3760 88%, #1d3557 100%); }
.app { position: relative; width: 78px; height: 78px; flex: none; border-radius: 18px; box-shadow: 0 2px 4px rgba(0,0,0,.3); }
.app > svg { width: 78px; height: 78px; border-radius: 18px; overflow: hidden; }
.running::after { content: ""; position: absolute; left: 35px; top: 95px; width: 8px; height: 8px; border-radius: 50%; background: #a2c0e8; }
.petals rect { mix-blend-mode: multiply; }
.green-app { background: linear-gradient(#87ee7b, #54bb44); }
.calendar { background: #f8f8f7; overflow: hidden; display: flex; flex-direction: column; align-items: center; }
.month { width: 100%; height: 24px; background: #e0584c; color: #fff; text-align: center; font: 600 16px/27px "Inter", sans-serif; }
.day { font: 300 47px/50px "Inter", sans-serif; color: #222; letter-spacing: -2px; }
.tv { background: linear-gradient(#2c3834, #0c1012); color: #fff; display: flex; align-items: center; justify-content: center; }
.app > .tv-apple { width: 27px; height: 28px; border-radius: 0; margin-left: -3px; }
.tv span { font: 500 34px/40px "Inter", sans-serif; letter-spacing: -.5px; margin-left: -1px; }
.music { background: linear-gradient(#ec6378, #e5383f); }
.store { background: linear-gradient(#4fb2f0, #2a5bd8); }
.word-letter { font: 700 20px "Inter", sans-serif; fill: #fff; text-anchor: middle; }
.sep { width: 2px; height: 94px; margin: 7px 9px 0; background: rgba(140,165,190,.55); flex: none; }
.sep.second { margin: 7px 11px 0; }
.trash { margin: 0 0 3px; }
```
